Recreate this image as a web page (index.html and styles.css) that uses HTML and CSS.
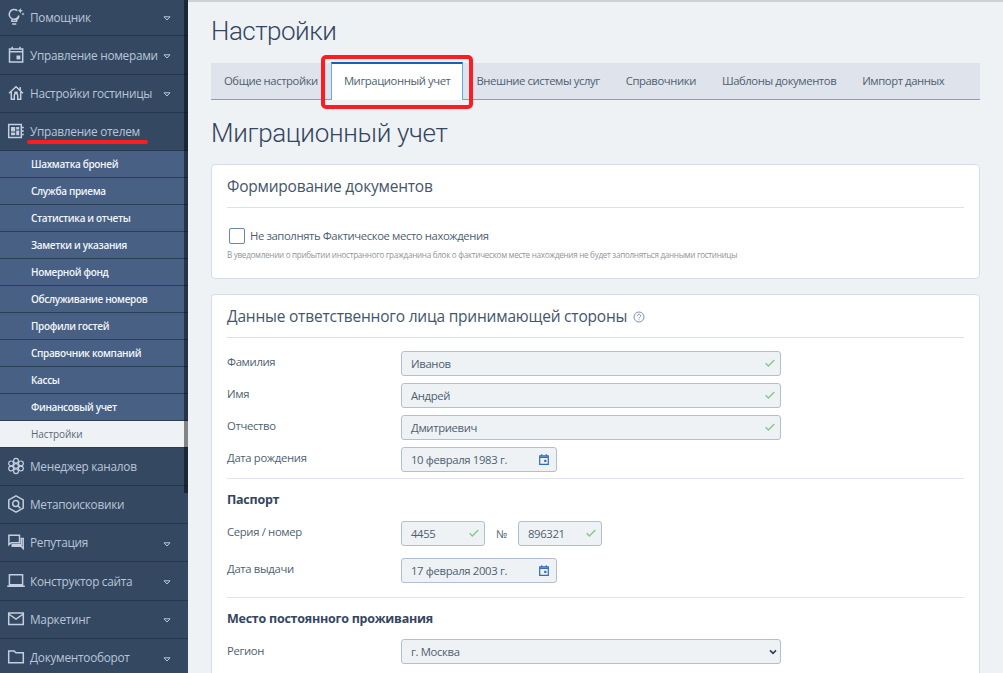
FILE: index.html
```
<!DOCTYPE html>
<html lang="ru">
<head>
<meta charset="utf-8">
<title>Настройки</title>
<link rel="stylesheet" href="styles.css">
</head>
<body>
<div class="app">
  <aside class="sidebar">
    <nav class="menu">
      <a class="item first"><svg class="ico" viewBox="0 0 18 18"><path d="M10.300 2.600A4.900 4.900 0 1 0 11.900 7.500M4.900 11.600v1.700h4.700v-1.700q1.800-1.300 2.300-3.600M5.200 15.900h4.100"/><path class="fill" d="M13.300 0l.8 1.900 1.900.8-1.900.8-.8 1.900-.8-1.900-1.900-.8 1.900-.8zM16 4.300l.5 1.100 1.100.5-1.100.5-.5 1.100-.5-1.100-1.100-.5 1.100-.5z"/></svg><span>Помощник</span><svg class="tri" viewBox="0 0 8 5"><path d="M1 .8h6L4 4z"/></svg></a>
      <a class="item"><svg class="ico" viewBox="0 0 18 18"><path d="M2.500 3h13.200v13H2.500zM2.500 5.800h13.200M5.200.8v2.500M13 .8v2.500"/><path class="fill" d="M9.500 9.500h3.900v3.900H9.500z"/></svg><span>Управление номерами</span><svg class="tri" viewBox="0 0 8 5"><path d="M1 .8h6L4 4z"/></svg></a>
      <a class="item"><svg class="ico" viewBox="0 0 18 18"><path d="M2 9.300l7-6.500 7 6.500M4.300 8v7.300h3v-4a1.700 1.700 0 0 1 3.400 0v4h3V8M13.200 6V3M7.300 8.200h3.400"/></svg><span>Настройки гостиницы</span><svg class="tri" viewBox="0 0 8 5"><path d="M1 .8h6L4 4z"/></svg></a>
      <a class="item"><svg class="ico" viewBox="0 0 18 18"><path d="M1.700 2.500h12.600v13H1.700zM15 5.500h1.800M15 9h1.800M15 12.500h1.800"/><path class="fill" d="M4 5h4.200v4.500H4zM9.200 5h3v2.500h-3zM4 10.500h4.200v2.700H4zM9.200 8.500h3v4.700h-3z"/></svg><span class="marked">Управление отелем</span></a>
      <div class="sub">
        <a>Шахматка броней</a>
        <a>Служба приема</a>
        <a>Статистика и отчеты</a>
        <a>Заметки и указания</a>
        <a>Номерной фонд</a>
        <a>Обслуживание номеров</a>
        <a>Профили гостей</a>
        <a>Справочник компаний</a>
        <a>Кассы</a>
        <a>Финансовый учет</a>
        <a class="current">Настройки</a>
      </div>
      <a class="item"><svg class="ico thin" viewBox="0 0 18 18"><circle cx="9" cy="9" r="2.400"/><circle cx="9" cy="3.700" r="2.400"/><circle cx="13.900" cy="6.400" r="2.400"/><circle cx="13.900" cy="11.600" r="2.400"/><circle cx="9" cy="14.300" r="2.400"/><circle cx="4.100" cy="11.600" r="2.400"/><circle cx="4.100" cy="6.400" r="2.400"/></svg><span>Менеджер каналов</span></a>
      <a class="item"><svg class="ico" viewBox="0 0 18 18"><path d="M9 .9l7.200 4v8.200l-7.200 4-7.200-4V4.900z"/><circle cx="8.700" cy="8.600" r="3"/><path d="M10.800 10.700l2.600 2.600"/></svg><span>Метапоисковики</span></a>
      <a class="item"><svg class="ico" viewBox="0 0 18 18"><path d="M1.900 2.300h10.600v7.400H4.300l-2.400 2z"/><path d="M14.300 5.500h1.900v10l-2.200-2.200H5.300v-1.600h9z"/></svg><span>Репутация</span><svg class="tri" viewBox="0 0 8 5"><path d="M1 .8h6L4 4z"/></svg></a>
      <a class="item"><svg class="ico" viewBox="0 0 18 18"><path d="M2.400 2.800h13.200v10H2.400zM.2 14.300h17.600"/></svg><span>Конструктор сайта</span><svg class="tri" viewBox="0 0 8 5"><path d="M1 .8h6L4 4z"/></svg></a>
      <a class="item"><svg class="ico" viewBox="0 0 18 18"><path d="M1.700 3h14.600v11.500H1.700zM1.700 4l7.300 5.200L16.300 4"/></svg><span>Маркетинг</span><svg class="tri" viewBox="0 0 8 5"><path d="M1 .8h6L4 4z"/></svg></a>
      <a class="item"><svg class="ico" viewBox="0 0 18 18"><path d="M1.700 3h5.500l1.600 1.700h7.500v10H1.700z"/></svg><span>Документооборот</span><svg class="tri" viewBox="0 0 8 5"><path d="M1 .8h6L4 4z"/></svg></a>
    </nav>
    <div class="thumb"></div>
  </aside>
  <main class="main">
    <h1>Настройки</h1>
    <div class="tabs">
      <a>Общие настройки</a>
      <a class="active">Миграционный учет</a>
      <a>Внешние системы услуг</a>
      <a>Справочники</a>
      <a>Шаблоны документов</a>
      <a>Импорт данных</a>
    </div>
    <h1 class="second">Миграционный учет</h1>
    <section class="card docs">
      <h2>Формирование документов</h2>
      <label class="check"><i></i>Не заполнять Фактическое место нахождения</label>
      <p class="hint">В уведомлении о прибытии иностранного гражданина блок о фактическом месте нахождения не будет заполняться данными гостиницы</p>
    </section>
    <section class="card person">
      <h2><span>Данные ответственного лица принимающей стороны</span><svg class="help" viewBox="0 0 12 12"><circle cx="6" cy="6" r="5"/><path d="M4.400 4.900a1.600 1.600 0 1 1 2.500 1.300c-.6.400-.9.600-.9 1.200M6 8.300v1"/></svg></h2>
      <div class="row"><span class="label">Фамилия</span><div class="field wide">Иванов<svg class="ok" viewBox="0 0 10 8"><path d="M.7 4.300l2.600 2.600L9.300.9"/></svg></div></div>
      <div class="row"><span class="label">Имя</span><div class="field wide">Андрей<svg class="ok" viewBox="0 0 10 8"><path d="M.7 4.300l2.600 2.600L9.300.9"/></svg></div></div>
      <div class="row"><span class="label">Отчество</span><div class="field wide">Дмитриевич<svg class="ok" viewBox="0 0 10 8"><path d="M.7 4.300l2.600 2.600L9.300.9"/></svg></div></div>
      <div class="row"><span class="label">Дата рождения</span><div class="field date">10 февраля 1983 г.<svg class="cal" viewBox="0 0 10 11"><path d="M.7 1.900h8.600v8.400H.7zM.7 3.300h8.600M2.700.3v2M7.300.3v2"/><path class="fill" d="M5.200 5.800h2.200v2.200H5.200z"/></svg></div></div>
      <hr>
      <h3>Паспорт</h3>
      <div class="row series"><span class="label">Серия / номер</span><div class="field short">4455<svg class="ok" viewBox="0 0 10 8"><path d="M.7 4.300l2.600 2.600L9.300.9"/></svg></div><span class="num">№</span><div class="field short">896321<svg class="ok" viewBox="0 0 10 8"><path d="M.7 4.300l2.600 2.600L9.300.9"/></svg></div></div>
      <div class="row"><span class="label">Дата выдачи</span><div class="field date">17 февраля 2003 г.<svg class="cal" viewBox="0 0 10 11"><path d="M.7 1.900h8.600v8.400H.7zM.7 3.300h8.600M2.700.3v2M7.300.3v2"/><path class="fill" d="M5.200 5.800h2.200v2.200H5.200z"/></svg></div></div>
      <hr class="last">
      <h3 class="place">Место постоянного проживания</h3>
      <div class="row region"><span class="label">Регион</span><div class="field wide">г. Москва<svg class="chev" viewBox="0 0 8 6"><path d="M1 1.300l3 3 3-3"/></svg></div></div>
    </section>
    <div class="callout"></div>
  </main>
</div>
</body>
</html>
```
FILE: styles.css
```
* { box-sizing: border-box; }
body { margin: 0; background: #eef2f5; color: #4f5f70; font: 11.300px "Open Sans", sans-serif; letter-spacing: -.34px; }
svg { fill: none; stroke: currentColor; flex: none; display: block; }
.fill { fill: currentColor; stroke: none; }
.app { display: flex; height: 673px; overflow: hidden; position: relative; }

.sidebar { width: 188px; flex: none; background: #344861; position: relative; overflow: hidden; }
.menu { display: flex; flex-direction: column; }
.item { height: 38.300px; flex: none; display: flex; align-items: center; border-bottom: 1px solid #26364d; color: #b9c6d9; font-size: 11.800px; padding: 0 17px 1px 7px; letter-spacing: -.27px; white-space: nowrap; }
.item.first { height: 36.400px; padding-bottom: 2px; }
.ico { width: 18px; height: 18px; margin-right: 5px; stroke-width: 1.500; color: #c3cfe0; }
.ico.thin { stroke-width: 1.200; }
.tri { width: 8px; height: 5px; margin-left: auto; margin-top: 4px; }
.marked { position: relative; }
.marked::after { content: ""; position: absolute; left: -3px; width: 121px; top: 17px; height: 4px; border-radius: 2px; background: #fc1c22; }
.sub { display: flex; flex-direction: column; }
.sub a { height: 26.950px; flex: none; display: flex; align-items: center; padding-left: 31px; background: #476084; border-bottom: 1px solid #2b3d57; color: #f2f5f9; font-size: 10px; font-weight: 600; letter-spacing: -.34px; white-space: nowrap; }
.sub .current { background: #eef2f5; color: #5b6878; font-weight: 400; letter-spacing: -.1px; }
.thumb { position: absolute; right: 0; top: 0; width: 4px; height: 493px; background: rgba(0,0,0,.45); }

.main { flex: 1; min-width: 0; padding: 0 23px 0 23px; border-top: 2px solid #ced2d6; position: relative; }
h1 { margin: 12px 0 0; font: 300 26px/34px Roboto, sans-serif; letter-spacing: -.5px; color: #34465f; white-space: nowrap; }
.tabs { margin-top: 15px; display: flex; height: 37px; background: #dfe3ec; border-bottom: 1px solid #5fabe8; }
.tabs a { padding: 0 13px; line-height: 36px; white-space: nowrap; letter-spacing: -.42px; }
.tabs .active { background: #fff; height: 38px; margin-top: -1px; border: 1px solid #5fabe8; border-top: 2px solid #1460bd; border-bottom: 0; padding: 0 12px; line-height: 34px; }
h1.second { margin-top: 16px; letter-spacing: -.32px; }
.card { background: #fff; border: 1px solid #d3deea; border-radius: 4px; padding: 0 15px; }
.docs { height: 115px; margin-top: 14px; }
h2 { margin: 0; height: 43px; line-height: 42px; font-size: 15.500px; font-weight: 400; letter-spacing: -.21px; color: #465569; border-bottom: 1px solid #dbe1ec; display: flex; align-items: center; white-space: nowrap; }
.check { display: flex; align-items: center; margin: 20px 0 0 2px; height: 16px; letter-spacing: -.4px; line-height: 14px; }
.check i { width: 16px; height: 16px; border: 1px solid #6b86ac; border-radius: 2px; margin-right: 5px; }
.hint { margin: 5px 0 0; font-size: 8.100px; letter-spacing: -.29px; line-height: 12px; color: #8f959d; white-space: nowrap; }
.person { height: 420px; margin-top: 15px; }
.help { width: 12px; height: 12px; margin-left: 6px; margin-top: 1px; color: #7d94b5; }
.row { display: flex; height: 25px; margin-bottom: 7px; }
h2 + .row { margin-top: 13px; }
.label { width: 174px; flex: none; line-height: 21px; }
.region .label { line-height: 23px; }
.field { height: 25px; border: 1px solid #b1bed4; border-radius: 3px; background: #eef2f5; padding: 0 5px 0 9px; display: flex; align-items: center; justify-content: space-between; white-space: nowrap; }
.wide { width: 380px; }
.date { width: 156px; padding-right: 7px; }
.short { width: 84px; }
.ok { width: 10px; height: 8px; color: #82c98a; stroke-width: 1.400; margin-top: -1px; }
.cal { width: 10px; height: 11px; color: #2d6dbe; stroke-width: 1.200; margin-top: -1px; }
.chev { width: 8px; height: 6px; color: #2f435e; stroke-width: 1.700; margin-right: -2px; }
hr { border: 0; height: 1px; background: #dfe4ee; margin: -1px 0 0; }
h3 { margin: 10px 0 11px; height: 21px; line-height: 21px; font-size: 12.500px; font-weight: 700; letter-spacing: -.25px; color: #34465f; }
.series { margin-bottom: 12px; }
.num { width: 33px; text-align: center; line-height: 25px; font-size: 11px; }
.last { margin-top: 14px; }
.place { margin-bottom: 10px; }
.callout { position: absolute; left: 133px; top: 53px; width: 152px; height: 54px; border: 4px solid #fc1c22; border-radius: 5px; }
```
